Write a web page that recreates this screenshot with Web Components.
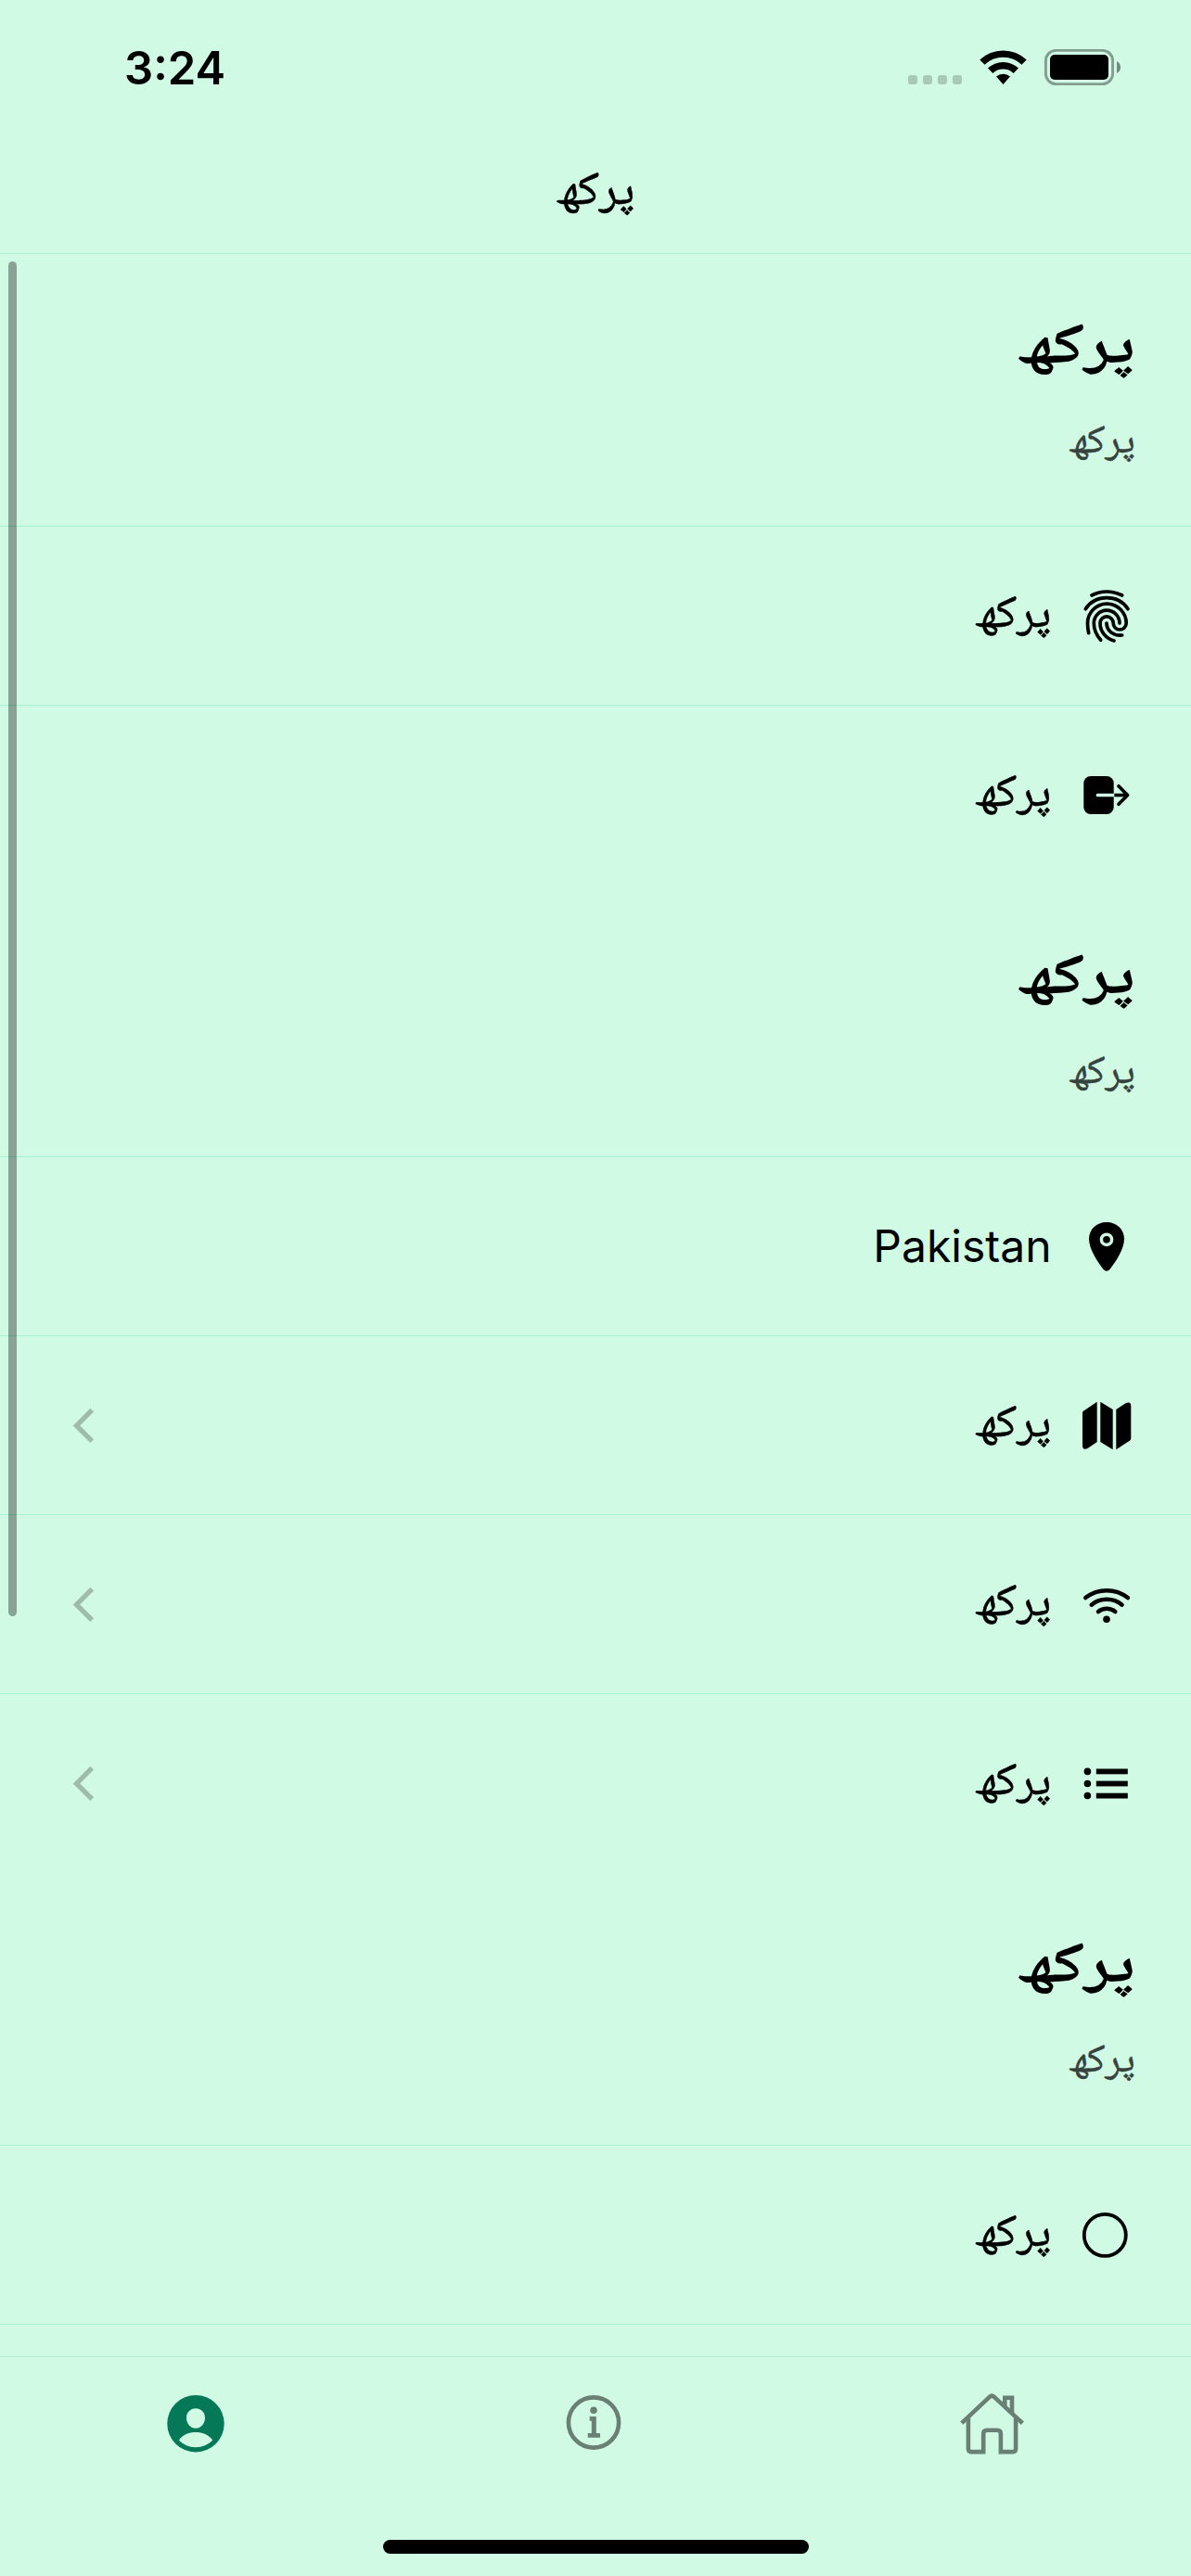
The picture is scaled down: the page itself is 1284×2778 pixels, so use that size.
<!DOCTYPE html>
<html lang="ur">
<head>
<meta charset="utf-8">
<title>پرکھ</title>
<style>
  html, body { margin: 0; background: #d1fae5; }
  body { width: 1284px; height: 2778px; overflow: hidden; color: #000; font-family: Inter, "DejaVu Sans", sans-serif; }
</style>
</head>
<body>
<app-screen>
  <status-bar slot="top" time="3:24"></status-bar>
  <nav-header slot="top"><ur-text kind="title">پرکھ</ur-text></nav-header>

  <section-head><ur-text kind="heading">پرکھ</ur-text><ur-text slot="sub" kind="sub">پرکھ</ur-text></section-head>
  <list-row icon="finger"><ur-text kind="row">پرکھ</ur-text></list-row>
  <list-row icon="exit" last><ur-text kind="row">پرکھ</ur-text></list-row>

  <section-head><ur-text kind="heading">پرکھ</ur-text><ur-text slot="sub" kind="sub">پرکھ</ur-text></section-head>
  <list-row icon="pin"><ur-text kind="latin">Pakistan</ur-text></list-row>
  <list-row icon="map" chevron><ur-text kind="row">پرکھ</ur-text></list-row>
  <list-row icon="wifi" chevron><ur-text kind="row">پرکھ</ur-text></list-row>
  <list-row icon="list" chevron last><ur-text kind="row">پرکھ</ur-text></list-row>

  <section-head><ur-text kind="heading">پرکھ</ur-text><ur-text slot="sub" kind="sub">پرکھ</ur-text></section-head>
  <list-row icon="circle"><ur-text kind="row">پرکھ</ur-text></list-row>

  <tab-bar slot="bottom"></tab-bar>
</app-screen>

<script>
const ICONS = {
  finger: [60, `<g fill="none" stroke="currentColor" stroke-width="3.7" stroke-linecap="round">
    <path d="M14 8Q22 4 30 4T46.7 8"/>
    <path d="M7.3 22.7C12.5 15 20.5 10.7 30 10.7S48 15 53 22.7"/>
    <path d="M10.7 48.7C9.8 45 9.5 42 9.5 38A20.8 20.8 0 0 1 51.2 38A7 7 0 0 1 37.2 38A7.1 7.1 0 0 0 23 38C23 47 29 54.5 38 57"/>
    <path d="M23.7 56.3C19 51 16.3 45 16.3 38A13.8 13.8 0 0 1 44 38"/>
    <path d="M30 38C30 46 37 52 46.7 51"/></g>`],
  exit: [60, `<rect x="5.3" y="10" width="32.4" height="41" rx="7.5" fill="currentColor"/>
    <path d="M20.3 30.5H38" stroke="#d1fae5" stroke-width="3.3" stroke-linecap="round"/>
    <path d="M38.3 30.5H52" stroke="currentColor" stroke-width="3.6"/>
    <path d="M43 20.7L52.6 30.5L43 40.2" fill="none" stroke="currentColor" stroke-width="3.7" stroke-linecap="round" stroke-linejoin="round"/>`],
  pin: [60, `<path fill="currentColor" d="M30 4C19.2 4 11 11.8 11 22.2C11 32.5 20 46.5 26.6 55Q30 58.5 33.4 55C40 46.5 49 32.5 49 22.2C49 11.8 40.8 4 30 4Z"/>
    <circle cx="30" cy="22.8" r="5.6" fill="none" stroke="#d1fae5" stroke-width="3.5"/>`],
  map: [60, `<g fill="currentColor"><path d="M19.7 4.7V48L9.5 55Q4 57.5 4 51.5V17Q4 15.4 5.3 14.5Z"/>
    <path d="M23.3 4.7L36.7 13V56.2L23.3 48Z"/>
    <path d="M40.3 13L50.5 6.3Q56.3 4 56.3 9.5V44Q56.3 45.6 55 46.5L40.3 56.2Z"/></g>`],
  wifi: [60, `<g fill="none" stroke="currentColor" stroke-width="4.5" stroke-linecap="round">
    <path d="M7.3 23A37 37 0 0 1 52.9 23"/><path d="M13.7 30.7A26 26 0 0 1 46.6 30.7"/><path d="M21 38A14.5 14.5 0 0 1 39.3 38"/></g>
    <circle cx="30" cy="46.3" r="3.8" fill="currentColor"/>`],
  list: [60, `<g fill="currentColor"><circle cx="9.4" cy="17.4" r="3.8"/><circle cx="9.4" cy="30.5" r="3.8"/><circle cx="9.4" cy="43.5" r="3.8"/>
    <rect x="18.8" y="14.5" width="34" height="5.8"/><rect x="18.8" y="27.6" width="34" height="5.8"/><rect x="18.8" y="40.7" width="34" height="5.8"/></g>`],
  circle: [60, `<circle cx="28.3" cy="30.4" r="22.5" fill="none" stroke="currentColor" stroke-width="3.8"/>`],
  chevron: [60, `<path d="M39.2 13.7L22.5 30.4L39.2 47.1" fill="none" stroke="currentColor" stroke-width="5.3"/>`],
  person: [70, `<path fill="currentColor" fill-rule="evenodd" d="M35 4A30.7 30.7 0 1 0 35 65.4A30.7 30.7 0 1 0 35 4ZM35 18.3C40.8 18.3 45 22.6 45 28.4C45 34.5 40.6 39.7 35 39.7S25 34.5 25 28.4C25 22.6 29.2 18.3 35 18.3ZM35 60.3C28 60.3 21.4 57.5 16.9 52.6C20.6 46.5 28 44 35 44S49.4 46.5 53.2 52.6C48.6 57.5 42 60.3 35 60.3Z"/>`],
  info: [70, `<circle cx="35" cy="33.5" r="27.1" fill="none" stroke="currentColor" stroke-width="4.6"/>
    <circle cx="35" cy="20.3" r="3.8" fill="currentColor"/><path fill="currentColor" d="M30.7 27H37.8V45H42V49.8H28.7V45H32.8V31.7H30.7Z"/>`],
  home: [70, `<g fill="none" stroke="currentColor" stroke-width="4.6">
    <path d="M2.8 34.2L32.8 5.9Q35.3 3.6 37.8 5.9L68.4 34.2"/>
    <path d="M9.9 28.5V61.8Q9.9 65.1 13.2 65.1H26.2V45.7Q26.2 41.8 30 41.8H41Q44.9 41.8 44.9 45.7V65.1H57.8Q61.1 65.1 61.1 61.8V28.5"/>
    <path d="M49.3 16.5V6.8H57V23.5"/></g>`],
};

const define = (name, markup) => customElements.define(name, class extends HTMLElement {
  connectedCallback() {
    if (this.shadowRoot) return;
    this.attachShadow({ mode: "open" }).innerHTML = typeof markup === "function" ? markup(this) : markup;
  }
});

define("ui-icon", el => {
  const [size, body] = ICONS[el.getAttribute("name")];
  return `<style>:host{display:block;flex:none;width:${size}px;height:${size}px}svg{display:block}</style>
    <svg width="${size}" height="${size}" viewBox="0 0 ${size} ${size}">${body}</svg>`;
});

define("ur-text", `<style>
  :host{display:block;direction:rtl;white-space:nowrap;font-family:"Noto Naskh Arabic","DejaVu Sans",sans-serif;font-size:50px;line-height:60px;transform-origin:100% 50%}
  :host([kind=row]){padding-top:4px;-webkit-text-stroke:.5px currentColor}
  :host([kind=heading]){font-size:62px;line-height:80px;font-weight:700;transform:scaleX(1.19)}
  :host([kind=sub]){font-size:43.5px;line-height:52px;color:#36433c;-webkit-text-stroke:.4px currentColor}
  :host([kind=title]){font-size:51.5px;-webkit-text-stroke:.5px currentColor}
  :host([kind=latin]){font-family:Inter,sans-serif;font-size:48px}
</style><slot></slot>`);

define("status-bar", el => `<style>
  :host{display:flex;height:144px;padding:0 76px 0 134px;justify-content:space-between;box-sizing:border-box}
  .time{font:600 49px/60px Inter,sans-serif;margin-top:44px}
  svg{display:block;margin-top:43px}
</style>
<div class="time">${el.getAttribute("time")}</div>
<svg width="232" height="60" viewBox="976 43 232 60">
  <g fill="#a8c9b8"><rect x="979" y="81" width="10" height="10" rx="3"/><rect x="995" y="81" width="10" height="10" rx="3"/><rect x="1011" y="81" width="10" height="10" rx="3"/><rect x="1027" y="81" width="10" height="10" rx="3"/></g>
  <path d="M1056.3 64.5A36.5 36.5 0 0 1 1106.7 64.5L1101.5 69.7A29 29 0 0 0 1061.5 69.7ZM1065 73.5A24 24 0 0 1 1098 73.5L1092.6 78.9A16.2 16.2 0 0 0 1070.4 78.9ZM1074 82.5A12 12 0 0 1 1089 82.5L1081.5 91Z"/>
  <rect x="1127.4" y="54.4" width="72.2" height="36.2" rx="11" fill="none" stroke="#839e90" stroke-width="2.9"/>
  <rect x="1132" y="59" width="63" height="27" rx="5"/>
  <path d="M1204 66Q1208 68 1208 72.5T1204 79Z" fill="#738a7e"/>
</svg>`);

define("nav-header", `<style>
  :host{display:flex;height:130px;box-sizing:border-box;justify-content:center;align-items:center;border-bottom:1px solid #aeefd2}
</style><slot></slot>`);

define("section-head", `<style>
  :host{display:flex;flex-direction:column;align-items:flex-end;gap:34px;height:294px;box-sizing:border-box;padding:65px 60px 0;border-bottom:1px solid #a7f3d0}
</style><slot></slot><slot name="sub"></slot>`);

define("list-row", el => `<style>
  :host{display:flex;align-items:center;height:193px;box-sizing:border-box;padding:0 61px 0 60px;border-bottom:1px solid #a7f3d0}
  :host([last]){border-bottom-color:transparent}
  .label{margin-left:auto;margin-right:29.5px}
  .chev{color:#9dbcac}
</style>${el.hasAttribute("chevron") ? '<ui-icon class="chev" name="chevron"></ui-icon>' : ""}
<div class="label"><slot></slot></div><ui-icon name="${el.getAttribute("icon")}"></ui-icon>`);

define("tab-bar", `<style>
  :host{display:flex;flex-direction:column;align-items:center;height:237px;box-sizing:border-box;border-top:1px solid #aeefd2;background:#d1fae5}
  nav{display:flex;width:928px;margin-right:4px;justify-content:space-between;padding-top:37px;color:#6a8074}
  .on{color:#047857}
  .bar{width:459px;height:15px;border-radius:8px;background:#000;margin-top:90px}
</style><nav><ui-icon class="on" name="person"></ui-icon><ui-icon name="info"></ui-icon><ui-icon name="home"></ui-icon></nav><div class="bar"></div>`);

define("app-screen", `<style>
  :host{display:flex;flex-direction:column;width:1284px;height:2778px;background:#d1fae5}
  main{flex:1;min-height:0;overflow:hidden;position:relative}
  .scroll{position:absolute;left:9px;top:8px;width:9px;height:1461px;border-radius:5px;background:rgba(0,0,0,.35)}
</style><slot name="top"></slot><main><slot></slot><div class="scroll"></div></main><slot name="bottom"></slot>`);
</script>
</body>
</html>
